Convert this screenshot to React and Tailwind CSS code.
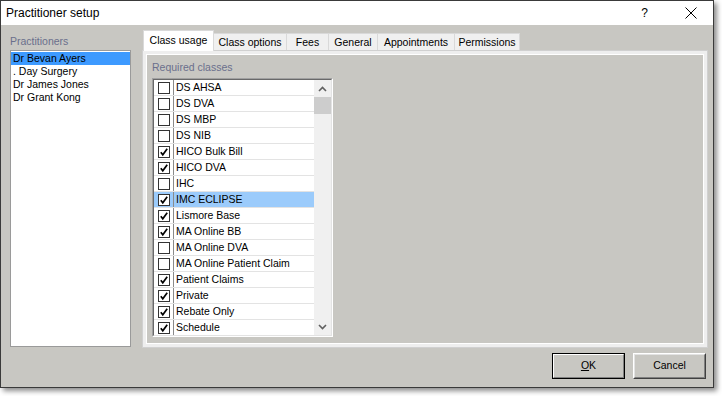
import React from "react";

const practitioners = ["Dr Bevan Ayers", ". Day Surgery", "Dr James Jones", "Dr Grant Kong"];

const classes = [
  { name: "DS AHSA", on: false },
  { name: "DS DVA", on: false },
  { name: "DS MBP", on: false },
  { name: "DS NIB", on: false },
  { name: "HICO Bulk Bill", on: true },
  { name: "HICO DVA", on: true },
  { name: "IHC", on: false },
  { name: "IMC ECLIPSE", on: true, selected: true },
  { name: "Lismore Base", on: true },
  { name: "MA Online BB", on: true },
  { name: "MA Online DVA", on: false },
  { name: "MA Online Patient Claim", on: false },
  { name: "Patient Claims", on: true },
  { name: "Private", on: true },
  { name: "Rebate Only", on: true },
  { name: "Schedule", on: true },
];

const tabs = [
  { label: "Class usage", w: "w-[71px]", active: true },
  { label: "Class options", w: "w-[73px]" },
  { label: "Fees", w: "w-[42px]" },
  { label: "General", w: "w-[49px]" },
  { label: "Appointments", w: "w-[77px]" },
  { label: "Permissions", w: "w-[65px]" },
];

const Checkbox = ({ checked }) => (
  <div className="w-[12px] h-[12px] border border-[#333333] bg-white flex items-center justify-center">
    {checked && (
      <svg width="10" height="10" viewBox="0 0 10 10">
        <path d="M1.8 5.2 L3.8 7.8 L8.2 1.8" fill="none" stroke="#000" strokeWidth="1.7" />
      </svg>
    )}
  </div>
);

const Chevron = ({ up }) => (
  <svg width="9" height="6" viewBox="0 0 9 6">
    <path
      d={up ? "M1 5 L4.5 1.5 L8 5" : "M1 1 L4.5 4.5 L8 1"}
      fill="none"
      stroke="#606060"
      strokeWidth="1.6"
    />
  </svg>
);

export default function App() {
  return (
    <div className="w-[722px] h-[396px] bg-white font-['Liberation_Sans',Arial,sans-serif] text-black">
      <div className="w-[714px] h-[388px] border border-[#3a3a3a] shadow-[3px_3px_5px_rgba(0,0,0,0.45)] flex flex-col bg-[#c8c7c2]">
        {/* Title bar */}
        <div className="h-[24px] bg-white flex items-center pl-[5px] pr-[16px] text-[12px]">
          <span className="flex-1">Practitioner setup</span>
          <span className="mr-[37px] text-[12px]">?</span>
          <svg width="12" height="12" viewBox="0 0 12 12">
            <path d="M0.5 0.5 L11.5 11.5 M11.5 0.5 L0.5 11.5" stroke="#000" strokeWidth="1" />
          </svg>
        </div>

        {/* Body */}
        <div className="flex-1 flex flex-col text-[10.5px]">
          <div className="h-[323px] flex">
            {/* Practitioners */}
            <div className="w-[121px] ml-[9px] flex flex-col">
              <div className="mt-[10px] h-[13px] leading-[13px] text-[#6a6f8c]">Practitioners</div>
              <div className="mt-[2px] h-[297px] bg-white border border-[#9a9a9a] pt-[1px]">
                {practitioners.map((p, i) => (
                  <div
                    key={p}
                    className={`h-[13px] leading-[13px] pl-[2px] ${i === 0 ? "bg-[#3d9aff]" : ""}`}
                  >
                    {p}
                  </div>
                ))}
              </div>
            </div>

            {/* Tab control */}
            <div className="ml-[11px] mt-[5px] w-[566px] flex flex-col">
              <div className="h-[20px] flex items-end pl-[1px]">
                {tabs.map((t) =>
                  t.active ? (
                    <div
                      key={t.label}
                      className={`${t.w} h-[21px] -mb-[1px] relative z-10 bg-white border-t border-l border-r border-[#d9d9d9] flex items-center justify-center pb-[1px]`}
                    >
                      {t.label}
                    </div>
                  ) : (
                    <div
                      key={t.label}
                      className={`${t.w} h-[17px] bg-[#f0f0f0] border-t border-r border-[#d9d9d9] flex items-center justify-center pt-[1px]`}
                    >
                      {t.label}
                    </div>
                  )
                )}
              </div>
              <div className="h-[298px] border border-[#d0d0d0] bg-[#eeeeee] p-[3px]">
                <div className="h-full border border-white bg-[#c8c7c2] pl-[5px]">
                  <div className="mt-[6px] h-[13px] leading-[13px] text-[#6a6f8c]">Required classes</div>
                  <div className="mt-[4px] w-[181px] h-[259px] border border-t-[#a0a0a0] border-l-[#a0a0a0] border-r-white border-b-white">
                    <div className="h-full border border-t-[#696969] border-l-[#696969] border-r-[#e3e3e3] border-b-[#e3e3e3] bg-white flex overflow-hidden">
                      <div className="w-[160px]">
                        {classes.map((c) => (
                          <div
                            key={c.name}
                            className={`h-[16px] flex border-b border-[#e3e3e3] ${c.selected ? "bg-[#9bcbfb]" : ""}`}
                          >
                            <div className="w-[20px] border-r border-[#8a8a8a] flex items-center justify-center">
                              <Checkbox checked={c.on} />
                            </div>
                            <div className="pl-[2px] leading-[15px] whitespace-nowrap">{c.name}</div>
                          </div>
                        ))}
                      </div>
                      <div className="w-[17px] bg-[#f0f0f0] flex flex-col">
                        <div className="h-[17px] flex items-center justify-center">
                          <Chevron up />
                        </div>
                        <div className="h-[17px] bg-[#cdcdcd]" />
                        <div className="flex-1" />
                        <div className="h-[17px] flex items-center justify-center">
                          <Chevron />
                        </div>
                      </div>
                    </div>
                  </div>
                </div>
              </div>
            </div>
          </div>

          {/* Buttons */}
          <div className="mt-[5px] flex justify-end gap-[8px] pr-[7px]">
            <button className="w-[73px] h-[26px] border border-black">
              <div className="h-full border border-t-white border-l-white border-r-[#808080] border-b-[#808080] flex items-center justify-center">
                <span>
                  <span className="underline">O</span>K
                </span>
              </div>
            </button>
            <button className="w-[73px] h-[26px] border border-t-white border-l-white border-r-[#404040] border-b-[#404040]">
              <div className="h-full border border-t-[#e3e3e3] border-l-[#e3e3e3] border-r-[#808080] border-b-[#808080] flex items-center justify-center">
                Cancel
              </div>
            </button>
          </div>
        </div>
      </div>
    </div>
  );
}
